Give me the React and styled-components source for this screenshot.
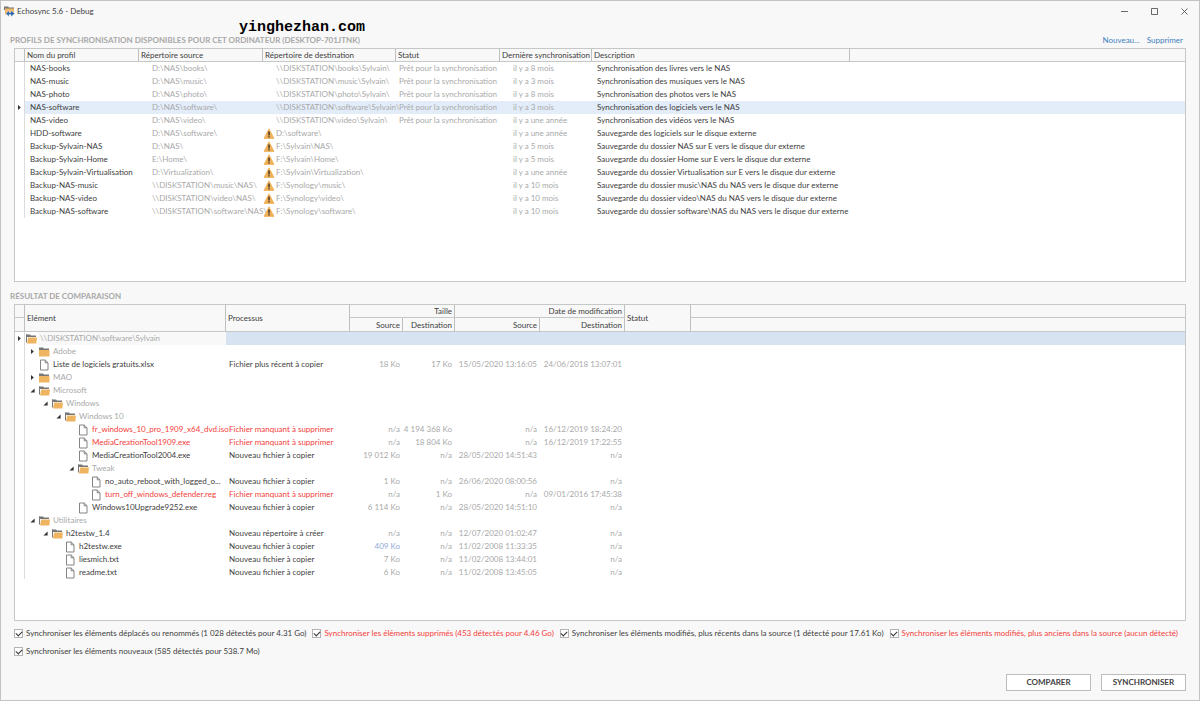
import React, { useState } from "react";
import styled, { createGlobalStyle } from "styled-components";

const profiles = [
  { name: "NAS-books", source: "D:\\NAS\\books\\", dest: "\\\\DISKSTATION\\books\\Sylvain\\", ready: true, last: "il y a 8 mois", description: "Synchronisation des livres vers le NAS" },
  { name: "NAS-music", source: "D:\\NAS\\music\\", dest: "\\\\DISKSTATION\\music\\Sylvain\\", ready: true, last: "il y a 3 mois", description: "Synchronisation des musiques vers le NAS" },
  { name: "NAS-photo", source: "D:\\NAS\\photo\\", dest: "\\\\DISKSTATION\\photo\\Sylvain\\", ready: true, last: "il y a 8 mois", description: "Synchronisation des photos vers le NAS" },
  { name: "NAS-software", source: "D:\\NAS\\software\\", dest: "\\\\DISKSTATION\\software\\Sylvain\\", ready: true, last: "il y a 3 mois", description: "Synchronisation des logiciels vers le NAS" },
  { name: "NAS-video", source: "D:\\NAS\\video\\", dest: "\\\\DISKSTATION\\video\\Sylvain\\", ready: true, last: "il y a une année", description: "Synchronisation des vidéos vers le NAS" },
  { name: "HDD-software", source: "D:\\NAS\\software\\", dest: "D:\\software\\", last: "il y a une année", description: "Sauvegarde des logiciels sur le disque externe" },
  { name: "Backup-Sylvain-NAS", source: "D:\\NAS\\", dest: "F:\\Sylvain\\NAS\\", last: "il y a 5 mois", description: "Sauvegarde du dossier NAS sur E vers le disque dur externe" },
  { name: "Backup-Sylvain-Home", source: "E:\\Home\\", dest: "F:\\Sylvain\\Home\\", last: "il y a 5 mois", description: "Sauvegarde du dossier Home sur E vers le disque dur externe" },
  { name: "Backup-Sylvain-Virtualisation", source: "D:\\Virtualization\\", dest: "F:\\Sylvain\\Virtualization\\", last: "il y a une année", description: "Sauvegarde du dossier Virtualisation sur E vers le disque dur externe" },
  { name: "Backup-NAS-music", source: "\\\\DISKSTATION\\music\\NAS\\", dest: "F:\\Synology\\music\\", last: "il y a 10 mois", description: "Sauvegarde du dossier music\\NAS du NAS vers le disque dur externe" },
  { name: "Backup-NAS-video", source: "\\\\DISKSTATION\\video\\NAS\\", dest: "F:\\Synology\\video\\", last: "il y a 10 mois", description: "Sauvegarde du dossier video\\NAS du NAS vers le disque dur externe" },
  { name: "Backup-NAS-software", source: "\\\\DISKSTATION\\software\\NAS\\", dest: "F:\\Synology\\software\\", last: "il y a 10 mois", description: "Sauvegarde du dossier software\\NAS du NAS vers le disque dur externe" },
];

const COPY = "Nouveau fichier à copier";
const MISSING = "Fichier manquant à supprimer";

const items = [
  { level: 0, type: "open", name: "\\\\DISKSTATION\\software\\Sylvain", tone: "muted" },
  { level: 1, type: "folder", name: "Adobe", tone: "muted" },
  { level: 1, type: "file", name: "Liste de logiciels gratuits.xlsx", process: "Fichier plus récent à copier", values: ["18 Ko", "17 Ko", "15/05/2020 13:16:05", "24/06/2018 13:07:01"] },
  { level: 1, type: "folder", name: "MAO", tone: "muted" },
  { level: 1, type: "open", name: "Microsoft", tone: "muted" },
  { level: 2, type: "open", name: "Windows", tone: "muted" },
  { level: 3, type: "open", name: "Windows 10", tone: "muted" },
  { level: 4, type: "file", name: "fr_windows_10_pro_1909_x64_dvd.iso", tone: "danger", process: MISSING, values: ["n/a", "4 194 368 Ko", "n/a", "16/12/2019 18:24:20"] },
  { level: 4, type: "file", name: "MediaCreationTool1909.exe", tone: "danger", process: MISSING, values: ["n/a", "18 804 Ko", "n/a", "16/12/2019 17:22:55"] },
  { level: 4, type: "file", name: "MediaCreationTool2004.exe", process: COPY, values: ["19 012 Ko", "n/a", "28/05/2020 14:51:43", "n/a"] },
  { level: 4, type: "open", name: "Tweak", tone: "muted" },
  { level: 5, type: "file", name: "no_auto_reboot_with_logged_o...", process: COPY, values: ["1 Ko", "n/a", "26/06/2020 08:00:56", "n/a"] },
  { level: 5, type: "file", name: "turn_off_windows_defender.reg", tone: "danger", process: MISSING, values: ["n/a", "1 Ko", "n/a", "09/01/2016 17:45:38"] },
  { level: 4, type: "file", name: "Windows10Upgrade9252.exe", process: COPY, values: ["6 114 Ko", "n/a", "28/05/2020 14:51:10", "n/a"] },
  { level: 1, type: "open", name: "Utilitaires", tone: "muted" },
  { level: 2, type: "open", name: "h2testw_1.4", process: "Nouveau répertoire à créer", values: ["n/a", "n/a", "12/07/2020 01:02:47", "n/a"] },
  { level: 3, type: "file", name: "h2testw.exe", process: COPY, values: ["409 Ko", "n/a", "11/02/2008 11:33:35", "n/a"], accent: true },
  { level: 3, type: "file", name: "liesmich.txt", process: COPY, values: ["7 Ko", "n/a", "11/02/2008 13:44:01", "n/a"] },
  { level: 3, type: "file", name: "readme.txt", process: COPY, values: ["6 Ko", "n/a", "11/02/2008 13:45:05", "n/a"] },
];

const syncOptions = [
  { id: "moved", label: "Synchroniser les éléments déplacés ou renommés (1 028 détectés pour 4.31 Go)" },
  { id: "deleted", label: "Synchroniser les éléments supprimés (453 détectés pour 4.46 Go)", tone: "danger" },
  { id: "newer", label: "Synchroniser les éléments modifiés, plus récents dans la source (1 détecté pour 17.61 Ko)" },
  { id: "older", label: "Synchroniser les éléments modifiés, plus anciens dans la source (aucun détecté)", tone: "danger" },
  { id: "added", label: "Synchroniser les éléments nouveaux (585 détectés pour 538.7 Mo)" },
];

const tones = {
  normal: "#404040",
  muted: "#a9a9a9",
  danger: "#f4403a",
  accent: "#8fa9d6",
};

const AppIcon = () => (
  <svg width="11" height="11" viewBox="0 0 11 11" aria-hidden="true">
    <path d="M0 .5h4l1 1h5V4H0z" fill="#777" />
    <path d="M1 2.5h9v6H1z" fill="#f0b765" />
    <path d="M2 7.5 5 4.4v2h2v-2l3.8 3.1L7 10.8V8.6H5v2.2z" fill="#2b68b0" stroke="#f8f8f8" strokeWidth="0.4" />
  </svg>
);

const FolderIcon = ({ open }) => (
  <svg width="12" height="10" viewBox="0 0 12 10" aria-hidden="true">
    <path d="M0 .5h4l1 1h5V3H0z" fill="#777" />
    {open ? (
      <>
        <path d="M0 .5h1v8H0z" fill="#777" />
        <path d="M2.2 3.4H11l-.7 6.1H1z" fill="#eeb45f" />
      </>
    ) : (
      <path d="M0 3h10.5v6.5H0z" fill="#eeb45f" />
    )}
  </svg>
);

const FileIcon = () => (
  <svg width="12" height="12" viewBox="0 0 12 12" aria-hidden="true">
    <path d="M1.5 1h4.7l2.8 2.8V11H1.5zM6.2 1v2.8H9" fill="#fff" stroke="#777" strokeWidth="0.9" />
  </svg>
);

const WarningIcon = () => (
  <svg width="12" height="11" viewBox="0 0 12 11" aria-hidden="true">
    <path d="M6 .8 11 10.4H1z" fill="#efb057" stroke="#efb057" strokeLinejoin="round" strokeWidth="0.8" />
    <path d="M5.3 3.4h1.4v4H5.3zM5.3 8.2h1.4v1.4H5.3z" fill="#3c3020" />
  </svg>
);

const Arrow = ({ open }) => (
  <svg width="5" height="7" viewBox="0 0 5 7" aria-hidden="true">
    <path d={open ? "M4.6 1.6v4H.4z" : "M1 1 3.8 3.5 1 6z"} fill="#333" />
  </svg>
);

export default function App() {
  const [selected, setSelected] = useState(3);
  const [checked, setChecked] = useState(syncOptions.map((option) => option.id));

  const toggle = (id) => {
    setChecked(checked.includes(id) ? checked.filter((c) => c !== id) : [...checked, id]);
  };

  return (
    <Window>
      <GlobalStyle />
      <TitleBar>
        <AppIcon />
        <Title>Echosync 5.6 - Debug</Title>
        <WindowButton aria-label="Réduire">
          <svg width="9" height="9" viewBox="0 0 9 9"><path d="M1 4.5h7" /></svg>
        </WindowButton>
        <WindowButton aria-label="Agrandir">
          <svg width="9" height="9" viewBox="0 0 9 9"><path d="M1.5 1.5h6v6h-6z" /></svg>
        </WindowButton>
        <WindowButton aria-label="Fermer">
          <svg width="9" height="9" viewBox="0 0 9 9"><path d="m1.5 1.5 6 6m0-6-6 6" /></svg>
        </WindowButton>
      </TitleBar>
      <Watermark>yinghezhan.com</Watermark>
      <Main>
        <SectionHeader>
          <h2>Profils de synchronisation disponibles pour cet ordinateur (DESKTOP-701JTNK)</h2>
          <nav>
            <a href="#nouveau">Nouveau...</a>
            <a href="#supprimer">Supprimer</a>
          </nav>
        </SectionHeader>
        <Panel $grow={14}>
          <Grid>
            <colgroup>
              <Col $width={10} />
              <Col $width={114} />
              <Col $width={124} />
              <Col $width={133} />
              <Col $width={104} />
              <Col $width={92} />
              <Col $width={258} />
              <col />
            </colgroup>
            <thead>
              <tr>
                <HeadCell />
                <HeadCell>Nom du profil</HeadCell>
                <HeadCell>Répertoire source</HeadCell>
                <HeadCell>Répertoire de destination</HeadCell>
                <HeadCell>Statut</HeadCell>
                <HeadCell>Dernière synchronisation</HeadCell>
                <HeadCell>Description</HeadCell>
                <HeadCell />
              </tr>
            </thead>
            <tbody>
              {profiles.map((profile, index) => (
                <ProfileRow key={profile.name} $selected={index === selected} onClick={() => setSelected(index)}>
                  <MarkerCell>{index === selected && <Arrow />}</MarkerCell>
                  <Cell $indent={5}>{profile.name}</Cell>
                  <FocusCell $focused={index === selected} $tone="muted" $indent={13}>{profile.source}</FocusCell>
                  <Cell $tone="muted">
                    <Destination>
                      <IconSlot>{!profile.ready && <WarningIcon />}</IconSlot>
                      {profile.dest}
                    </Destination>
                  </Cell>
                  <Cell $tone="muted" $indent={3}>{profile.ready && "Prêt pour la synchronisation"}</Cell>
                  <Cell $tone="muted" $indent={13}>{profile.last}</Cell>
                  <Cell $indent={5}>{profile.description}</Cell>
                  <Cell />
                </ProfileRow>
              ))}
            </tbody>
          </Grid>
        </Panel>
        <SectionHeader>
          <h2>Résultat de comparaison</h2>
        </SectionHeader>
        <Panel $grow={19}>
          <Grid>
            <colgroup>
              <Col $width={10} />
              <Col $width={201} />
              <Col $width={124} />
              <Col $width={53} />
              <Col $width={52} />
              <Col $width={85} />
              <Col $width={85} />
              <Col $width={66} />
              <col />
            </colgroup>
            <thead>
              <tr>
                <HeadCell />
                <HeadCell rowSpan={2}>Elément</HeadCell>
                <HeadCell rowSpan={2}>Processus</HeadCell>
                <HeadCell colSpan={2} $align="right">Taille</HeadCell>
                <HeadCell colSpan={2} $align="right">Date de modification</HeadCell>
                <HeadCell rowSpan={2}>Statut</HeadCell>
                <HeadCell />
              </tr>
              <SubHeadRow>
                <HeadCell />
                <HeadCell $align="right">Source</HeadCell>
                <HeadCell $align="right">Destination</HeadCell>
                <HeadCell $align="right">Source</HeadCell>
                <HeadCell $align="right">Destination</HeadCell>
                <HeadCell />
              </SubHeadRow>
            </thead>
            <tbody>
              {items.map((item) => (
                <ResultRow key={item.name} $root={item.level === 0}>
                  <MarkerCell>{item.level === 0 && <Arrow />}</MarkerCell>
                  <Cell $tone={item.tone}>
                    <TreeItem $level={item.level}>
                      {item.level > 0 && (
                        <Expander>{item.type !== "file" && <Arrow open={item.type === "open"} />}</Expander>
                      )}
                      {item.type === "file" ? <FileIcon /> : <FolderIcon open={item.type === "open"} />}
                      <TreeLabel $focused={item.level === 0}>{item.name}</TreeLabel>
                    </TreeItem>
                  </Cell>
                  <Cell $tone={item.tone} $indent={3}>{item.process}</Cell>
                  {[0, 1, 2, 3].map((i) => (
                    <Cell key={i} $align="right" $tone={item.accent && i === 0 ? "accent" : "muted"}>
                      {item.values && item.values[i]}
                    </Cell>
                  ))}
                  <Cell />
                  <Cell />
                </ResultRow>
              ))}
            </tbody>
          </Grid>
        </Panel>
        <Options>
          {syncOptions.map((option) => (
            <Option key={option.id} $tone={option.tone}>
              <Checkbox
                type="checkbox"
                checked={checked.includes(option.id)}
                onChange={() => toggle(option.id)}
              />
              {option.label}
            </Option>
          ))}
        </Options>
        <Actions>
          <ActionButton>Comparer</ActionButton>
          <ActionButton>Synchroniser</ActionButton>
        </Actions>
      </Main>
    </Window>
  );
}

const GlobalStyle = createGlobalStyle`
  * {
    box-sizing: border-box;
  }
  body {
    margin: 0;
    font-family: Lato, "Open Sans", sans-serif;
    font-size: 8px;
    line-height: 13px;
    color: ${tones.normal};
    background: #f8f8f8;
  }
  svg {
    display: block;
    flex: none;
  }
`;

const Window = styled.div`
  position: relative;
  display: flex;
  flex-direction: column;
  min-height: 100vh;
  border: 1px solid #c3c3c3;
  background: #f8f8f8;
`;

const TitleBar = styled.header`
  display: flex;
  align-items: center;
  height: 21px;
  padding-left: 3px;
`;

const Title = styled.h1`
  flex: 1;
  margin: 0;
  padding-left: 2px;
  font-size: 8px;
  font-weight: 400;
`;

const WindowButton = styled.button`
  display: flex;
  align-items: center;
  justify-content: center;
  width: 30px;
  height: 21px;
  padding: 0;
  border: none;
  background: none;
  path {
    fill: none;
    stroke: #444;
    stroke-width: 0.8;
  }
`;

const Watermark = styled.div`
  position: absolute;
  top: 18px;
  left: 238px;
  font: bold 15px/17px "Liberation Mono", monospace;
  color: #000;
`;

const Main = styled.main`
  flex: 1;
  display: flex;
  flex-direction: column;
  padding: 4px 13px 9px;
`;

const SectionHeader = styled.div`
  display: flex;
  justify-content: space-between;
  align-items: flex-end;
  height: 22px;
  margin-left: -4px;
  padding: 0 3px 1px 0;
  h2 {
    margin: 0;
    font-size: 8px;
    font-weight: 700;
    text-transform: uppercase;
    color: #a8a8a8;
  }
  nav {
    display: flex;
    gap: 7px;
  }
  a {
    color: #3f80bd;
    text-decoration: none;
  }
`;

const Panel = styled.section`
  flex: ${(props) => props.$grow} 0 0px;
  border: 1px solid #c6c8c8;
  background: #fff;
`;

const Grid = styled.table`
  width: 100%;
  table-layout: fixed;
  border-collapse: separate;
  border-spacing: 0;
`;

const Col = styled.col`
  width: ${(props) => props.$width}px;
`;

const HeadCell = styled.th`
  height: 13px;
  padding: 0 2px;
  border-right: 1px solid #c0c0c0;
  border-bottom: 1px solid #c6c8c8;
  background: #f8f8f8;
  font-weight: 400;
  line-height: 12px;
  text-align: ${(props) => props.$align || "left"};
  white-space: nowrap;
  &:last-child {
    border-right: none;
  }
`;

const SubHeadRow = styled.tr`
  height: 14px;
`;

const Cell = styled.td`
  height: 13px;
  padding: 0 ${(props) => (props.$align ? 3 : 0)}px 0 ${(props) => props.$indent || 0}px;
  color: ${(props) => tones[props.$tone || "normal"]};
  text-align: ${(props) => props.$align || "left"};
  white-space: nowrap;
`;

const FocusCell = styled(Cell)`
  && {
    background: ${(props) => props.$focused && "#f8f8f8"};
  }
`;

const MarkerCell = styled.td`
  padding: 0 0 0 2px;
  border-right: 1px solid #dcdcdc;
`;

const ProfileRow = styled.tr`
  ${Cell} {
    background: ${(props) => props.$selected && "#e3edf9"};
  }
`;

const ResultRow = styled.tr`
  ${Cell}:nth-child(n + 3) {
    background: ${(props) => props.$root && "#d7e3f0"};
  }
`;

const Destination = styled.div`
  display: flex;
  align-items: center;
  height: 13px;
`;

const IconSlot = styled.span`
  flex: none;
  width: 13px;
`;

const TreeItem = styled.div`
  display: flex;
  align-items: center;
  height: 13px;
  padding-left: ${(props) => 1 + Math.max(props.$level - 1, 0) * 13}px;
`;

const Expander = styled.span`
  display: flex;
  flex: none;
  justify-content: center;
  width: 13px;
`;

const TreeLabel = styled.span`
  flex: 1;
  min-width: 0;
  padding-left: 2px;
  background: ${(props) => props.$focused && "#f8f8f8"};
`;

const Options = styled.div`
  display: flex;
  flex-wrap: wrap;
  gap: 5px 6px;
  padding-top: 6px;
`;

const Option = styled.label`
  display: flex;
  align-items: center;
  gap: 3px;
  color: ${(props) => tones[props.$tone || "normal"]};
`;

const Checkbox = styled.input`
  appearance: none;
  display: grid;
  place-items: center;
  width: 9px;
  height: 9px;
  margin: 0;
  border: 1px solid #b4b4b4;
  background: #fff;
  &:checked::before {
    content: "";
    width: 5px;
    height: 3px;
    border: solid #333;
    border-width: 0 0 1px 1px;
    transform: translateY(-1px) rotate(-45deg);
  }
`;

const Actions = styled.div`
  display: flex;
  justify-content: flex-end;
  gap: 10px;
  padding-top: 16px;
`;

const ActionButton = styled.button`
  width: 85px;
  height: 17px;
  padding: 0;
  border: 1px solid #bcbcbc;
  background: #fff;
  font: 700 8px/13px Lato, "Open Sans", sans-serif;
  text-transform: uppercase;
  color: ${tones.normal};
`;
